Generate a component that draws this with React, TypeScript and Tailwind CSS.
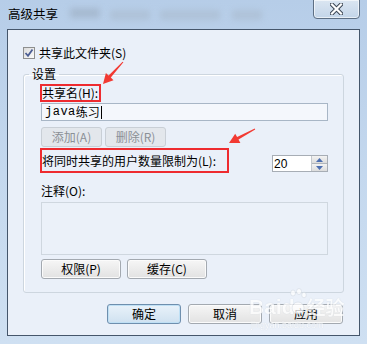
import React from "react";

const font = { fontFamily: '"Noto Sans CJK SC", "Liberation Sans", sans-serif' };

function Btn({ children, w, disabled, def }: { children: React.ReactNode; w: string; disabled?: boolean; def?: boolean }) {
  const base = "h-[20px] flex items-center justify-center rounded-[3px] text-[12px] leading-[14px] border";
  if (disabled)
    return <div className={`${base} ${w} border-[#c9cfd6] bg-[#e3e7ec] text-[#8b9096]`}>{children}</div>;
  if (def)
    return (
      <div className={`${base} ${w} border-[#6f8fae] bg-gradient-to-b from-[#e9f2fa] to-[#cfe1f0] text-black shadow-[inset_0_0_0_1px_#bfe0f5]`}>
        {children}
      </div>
    );
  return (
    <div className={`${base} ${w} border-[#a3a9b0] bg-gradient-to-b from-[#f6f6f6] to-[#e2e2e2] text-black shadow-[inset_0_0_0_1px_#fbfbfb]`}>
      {children}
    </div>
  );
}

export default function App() {
  return (
    <div
      className="relative w-[367px] h-[344px] overflow-hidden bg-gradient-to-b from-[#b6cde8] via-[#c4d8ee] to-[#cfe0f2] flex flex-col"
      style={font}
    >
      {/* blurred glass patches */}
      <div className="absolute left-[70px] top-[8px] w-[30px] h-[10px] bg-[#9fb1c6] blur-[3px] opacity-70" />
      <div className="absolute left-[110px] top-[10px] w-[40px] h-[10px] bg-[#a9bacd] blur-[3px] opacity-60" />
      <div className="absolute left-[160px] top-[10px] w-[60px] h-[10px] bg-[#a9bacd] blur-[3px] opacity-60" />
      <div className="absolute left-[232px] top-[10px] w-[30px] h-[10px] bg-[#a9bacd] blur-[3px] opacity-60" />

      {/* title bar */}
      <div className="h-[29px] shrink-0 pl-[8px] pt-[7px] text-[12.5px] leading-[14px] text-black">高级共享</div>

      {/* close button */}
      <div className="absolute left-[313px] top-[-1px] w-[47px] h-[20px] rounded-b-[4px] border border-[#5d6f84] bg-gradient-to-b from-[#dbe6f2] to-[#c3d5e9] shadow-[inset_0_0_0_1px_rgba(255,255,255,0.6)] flex items-center justify-center">
        <svg width="13" height="12" viewBox="0 0 13 12">
          <path d="M2 1.5 L11 10.5 M11 1.5 L2 10.5" stroke="#3b4654" strokeWidth="4.2" strokeLinecap="square" />
          <path d="M2 1.5 L11 10.5 M11 1.5 L2 10.5" stroke="#ffffff" strokeWidth="2.2" strokeLinecap="square" />
        </svg>
      </div>

      {/* client area */}
      <div className="mx-[7px] h-[307px] shrink-0 border border-[#45566b] bg-[#eaf0f9] flex flex-col text-[12px] leading-[14px] text-black">
        {/* share checkbox */}
        <div className="mt-[16px] ml-[15px] flex items-center gap-[4px] h-[14px]">
          <div className="w-[12px] h-[12px] border border-[#8e8f8f] bg-gradient-to-br from-[#dcdcdc] to-[#fbfbfb] flex items-center justify-center">
            <svg width="10" height="10" viewBox="0 0 10 10">
              <path d="M1.5 5 L4 7.8 L8.5 1.5" fill="none" stroke="#4b5d93" strokeWidth="1.8" />
            </svg>
          </div>
          <span>共享此文件夹(S)</span>
        </div>

        {/* settings group */}
        <fieldset className="mt-[7px] ml-[15px] w-[321px] h-[226px] border border-[#cdd6df] rounded-[3px] shadow-[inset_1px_1px_0_#ffffff]">
          <legend className="ml-[5px] px-[3px]">设置</legend>
          <div className="pl-[17px] pr-[14px] flex flex-col">
            <div className="mt-[3px] -ml-[1px] self-start border-2 border-[#ee2b2f] h-[18px] pr-[1px] flex items-center">
              共享名(H):
            </div>
            <div className="mt-[1px] w-[287px] h-[18px] border border-[#a8b6c6] bg-[#f4f7fc] flex items-center pl-[3px] font-['Liberation_Mono','Noto_Sans_CJK_SC',monospace]">
              <span className="tracking-[0.5px]">java</span>
              <span style={font}>练习</span>
              <span className="w-[1px] h-[13px] bg-black ml-[1px]" />
            </div>
            <div className="mt-[6px] flex gap-[3px]">
              <Btn w="w-[61px]" disabled>添加(A)</Btn>
              <Btn w="w-[61px]" disabled>删除(R)</Btn>
            </div>
            <div className="mt-[1px] flex items-start">
              <div className="-ml-[1px] w-[189px] h-[25px] border-2 border-[#ee2b2f] flex items-center">
                将同时共享的用户数量限制为(L):
              </div>
              <div className="ml-[43px] mt-[7px] w-[56px] h-[17px] border border-[#a7adb5] bg-white flex">
                <div className="flex-1 flex items-center pl-[1px] text-[12px]" style={{ fontFamily: '"Liberation Sans", sans-serif' }}>
                  20
                </div>
                <div className="w-[16px] flex flex-col border-l border-[#c4c9cf]">
                  <div className="flex-1 bg-gradient-to-b from-[#f3f3f3] to-[#dcdcdc] border-b border-[#b0b5bb] flex items-center justify-center">
                    <svg width="7" height="4" viewBox="0 0 7 4"><path d="M0 4 L3.5 0 L7 4 Z" fill="#4d6fb0" /></svg>
                  </div>
                  <div className="flex-1 bg-gradient-to-b from-[#f3f3f3] to-[#dcdcdc] flex items-center justify-center">
                    <svg width="7" height="4" viewBox="0 0 7 4"><path d="M0 0 L3.5 4 L7 0 Z" fill="#4d6fb0" /></svg>
                  </div>
                </div>
              </div>
            </div>
            <div className="mt-[11px]">注释(O):</div>
            <div className="mt-[4px] w-[287px] h-[53px] border border-[#cfd7df] bg-[#ebf1f9]" />
            <div className="mt-[4px] flex gap-[6px]">
              <Btn w="w-[80px]">权限(P)</Btn>
              <Btn w="w-[80px]">缓存(C)</Btn>
            </div>
          </div>
        </fieldset>

        {/* bottom buttons */}
        <div className="mt-[11px] ml-[99px] flex gap-[7px]">
          <Btn w="w-[74px]" def>确定</Btn>
          <Btn w="w-[74px]">取消</Btn>
          <Btn w="w-[74px]">应用</Btn>
        </div>
      </div>

      {/* watermark */}
      <div className="absolute left-[249px] top-[288px] pointer-events-none opacity-75">
        <div className="flex items-end text-white h-[30px]" style={{ fontFamily: '"Liberation Sans", sans-serif', textShadow: "0 0 1px #b9c3ce" }}>
          <span className="text-[21px] font-bold leading-[22px]">Baid</span>
          <svg width="18" height="28" viewBox="0 0 18 28" className="-ml-[6px] mb-[2px]">
            <ellipse cx="4" cy="5" rx="2.5" ry="3" fill="white" stroke="#c8d0da" strokeWidth="0.6" />
            <ellipse cx="10" cy="3.5" rx="2.5" ry="3" fill="white" stroke="#c8d0da" strokeWidth="0.6" />
            <ellipse cx="15" cy="7" rx="2.3" ry="2.8" fill="white" stroke="#c8d0da" strokeWidth="0.6" />
            <ellipse cx="9" cy="20" rx="6" ry="6" fill="white" stroke="#c8d0da" strokeWidth="0.6" />
          </svg>
          <span className="text-[19px] font-bold leading-[22px]" style={font}>经验</span>
        </div>
        <div className="mt-[2px] text-[9px] leading-[10px] text-white ml-[2px]" style={{ fontFamily: '"Liberation Sans", sans-serif', textShadow: "0 0 1px #b9c3ce" }}>
          jingyan.baidu.com
        </div>
      </div>

      {/* annotation arrows */}
      <svg className="absolute left-0 top-0 pointer-events-none" width="367" height="344">
        <polygon
          points="123.4,62.3 110.8,77.6 113.5,80.2 103,84 105.9,73.1 108.6,75.6 122.6,61.7"
          fill="#f23a33"
        />
        <polygon
          points="255.2,129.4 238.5,139.6 240.4,143.1 229,143 235.2,133.8 237.1,136.9 254.8,128.6"
          fill="#f23a33"
        />
      </svg>
    </div>
  );
}
